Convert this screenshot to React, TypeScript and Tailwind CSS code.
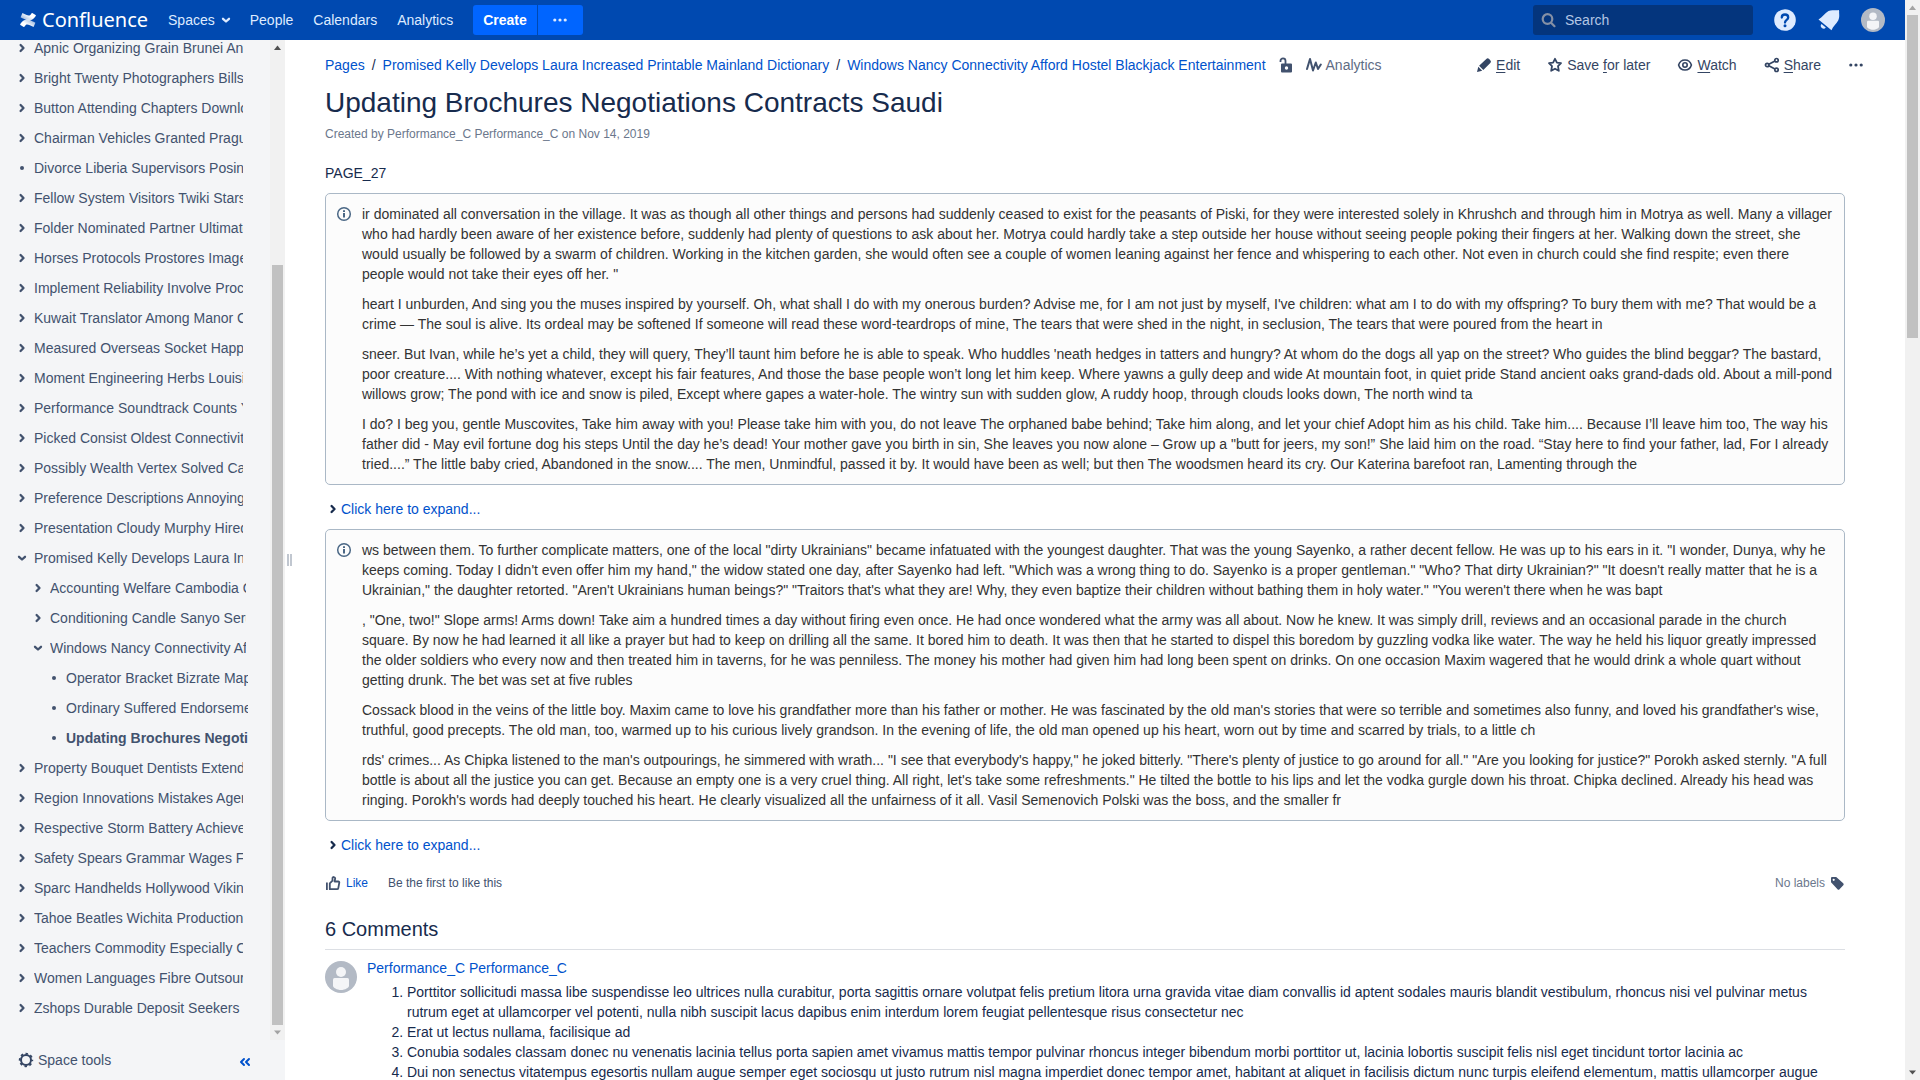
import React from "react";

type TreeItem = { label: string; level: 0 | 1 | 2; kind: "closed" | "open" | "leaf"; current?: boolean };

const top = (label: string): TreeItem => ({ label, level: 0, kind: "closed" });

const tree: TreeItem[] = [
  top("Apnic Organizing Grain Brunei Andy"),
  top("Bright Twenty Photographers Bills"),
  top("Button Attending Chapters Downloads"),
  top("Chairman Vehicles Granted Prague"),
  { label: "Divorce Liberia Supervisors Posing", level: 0, kind: "leaf" },
  top("Fellow System Visitors Twiki Stars"),
  top("Folder Nominated Partner Ultimately"),
  top("Horses Protocols Prostores Images"),
  top("Implement Reliability Involve Process"),
  top("Kuwait Translator Among Manor Child"),
  top("Measured Overseas Socket Happy"),
  top("Moment Engineering Herbs Louisiana"),
  top("Performance Soundtrack Counts Yarn"),
  top("Picked Consist Oldest Connectivity"),
  top("Possibly Wealth Vertex Solved Cape"),
  top("Preference Descriptions Annoying"),
  top("Presentation Cloudy Murphy Hired"),
  { label: "Promised Kelly Develops Laura Increased", level: 0, kind: "open" },
  { label: "Accounting Welfare Cambodia Ocean", level: 1, kind: "closed" },
  { label: "Conditioning Candle Sanyo Serum", level: 1, kind: "closed" },
  { label: "Windows Nancy Connectivity Afford Hostel", level: 1, kind: "open" },
  { label: "Operator Bracket Bizrate Maple", level: 2, kind: "leaf" },
  { label: "Ordinary Suffered Endorsement", level: 2, kind: "leaf" },
  { label: "Updating Brochures Negotiations", level: 2, kind: "leaf", current: true },
  top("Property Bouquet Dentists Extend"),
  top("Region Innovations Mistakes Agents"),
  top("Respective Storm Battery Achieved"),
  top("Safety Spears Grammar Wages From"),
  top("Sparc Handhelds Hollywood Viking"),
  top("Tahoe Beatles Wichita Production"),
  top("Teachers Commodity Especially Come"),
  top("Women Languages Fibre Outsource"),
  top("Zshops Durable Deposit Seekers"),
];

const firstPanel = [
  "ir dominated all conversation in the village. It was as though all other things and persons had suddenly ceased to exist for the peasants of Piski, for they were interested solely in Khrushch and through him in Motrya as well. Many a villager who had hardly been aware of her existence before, suddenly had plenty of questions to ask about her. Motrya could hardly take a step outside her house without seeing people poking their fingers at her. Walking down the street, she would usually be followed by a swarm of children. Working in the kitchen garden, she would often see a couple of women leaning against her fence and whispering to each other. Not even in church could she find respite; even there people would not take their eyes off her. \"",
  "heart I unburden, And sing you the muses inspired by yourself. Oh, what shall I do with my onerous burden? Advise me, for I am not just by myself, I've children: what am I to do with my offspring? To bury them with me? That would be a crime — The soul is alive. Its ordeal may be softened If someone will read these word-teardrops of mine, The tears that were shed in the night, in seclusion, The tears that were poured from the heart in",
  "sneer. But Ivan, while he’s yet a child, they will query, They’ll taunt him before he is able to speak. Who huddles 'neath hedges in tatters and hungry? At whom do the dogs all yap on the street? Who guides the blind beggar? The bastard, poor creature.... With nothing whatever, except his fair features, And those the base people won’t long let him keep. Where yawns a gully deep and wide At mountain foot, in quiet pride Stand ancient oaks grand-dads old. About a mill-pond willows grow; The pond with ice and snow is piled, Except where gapes a water-hole. The wintry sun with sudden glow, A ruddy hoop, through clouds looks down, The north wind ta",
  "I do? I beg you, gentle Muscovites, Take him away with you! Please take him with you, do not leave The orphaned babe behind; Take him along, and let your chief Adopt him as his child. Take him.... Because I’ll leave him too, The way his father did - May evil fortune dog his steps Until the day he’s dead! Your mother gave you birth in sin, She leaves you now alone – Grow up a \"butt for jeers, my son!” She laid him on the road. “Stay here to find your father, lad, For I already tried....” The little baby cried, Abandoned in the snow.... The men, Unmindful, passed it by. It would have been as well; but then The woodsmen heard its cry. Our Katerina barefoot ran, Lamenting through the",
];

const secondPanel = [
  "ws between them. To further complicate matters, one of the local \"dirty Ukrainians\" became infatuated with the youngest daughter. That was the young Sayenko, a rather decent fellow. He was up to his ears in it. \"I wonder, Dunya, why he keeps coming. Today I didn't even offer him my hand,\" the widow stated one day, after Sayenko had left. \"Which was a wrong thing to do. Sayenko is a proper gentleman.\" \"Who? That dirty Ukrainian?\" \"It doesn't really matter that he is a Ukrainian,\" the daughter retorted. \"Aren't Ukrainians human beings?\" \"Traitors that's what they are! Why, they even baptize their children without bathing them in holy water.\" \"You weren't there when he was bapt",
  ", \"One, two!\" Slope arms! Arms down! Take aim a hundred times a day without firing even once. He had once wondered what the army was all about. Now he knew. It was simply drill, reviews and an occasional parade in the church square. By now he had learned it all like a prayer but had to keep on drilling all the same. It bored him to death. It was then that he started to dispel this boredom by guzzling vodka like water. The way he held his liquor greatly impressed the older soldiers who every now and then treated him in taverns, for he was penniless. The money his mother had given him had long been spent on drinks. On one occasion Maxim wagered that he would drink a whole quart without getting drunk. The bet was set at five rubles",
  "Cossack blood in the veins of the little boy. Maxim came to love his grandfather more than his father or mother. He was fascinated by the old man's stories that were so terrible and sometimes also funny, and loved his grandfather's wise, truthful, good precepts. The old man, too, warmed up to his curious lively grandson. In the evening of life, the old man opened up his heart, worn out by time and scarred by trials, to a little ch",
  "rds' crimes... As Chipka listened to the man's outpourings, he simmered with wrath... \"I see that everybody's happy,\" he joked bitterly. \"There's plenty of justice to go around for all.\" \"Are you looking for justice?\" Porokh asked sternly. \"A full bottle is about all the justice you can get. Because an empty one is a very cruel thing. All right, let's take some refreshments.\" He tilted the bottle to his lips and let the vodka gurgle down his throat. Chipka declined. Already his head was ringing. Porokh's words had deeply touched his heart. He clearly visualized all the unfairness of it all. Vasil Semenovich Polski was the boss, and the smaller fr",
];

const commentItems = [
  "Porttitor sollicitudi massa libe suspendisse leo ultrices nulla curabitur, porta sagittis ornare volutpat felis pretium litora urna gravida vitae diam convallis id aptent sodales mauris blandit vestibulum, rhoncus nisi vel pulvinar metus rutrum eget at ullamcorper vel potenti, nulla nibh suscipit lacus dapibus enim interdum lorem feugiat pellentesque risus consectetur nec",
  "Erat ut lectus nullama, facilisique ad",
  "Conubia sodales classam donec nu venenatis lacinia tellus porta sapien amet vivamus mattis tempor pulvinar rhoncus integer bibendum morbi porttitor ut, lacinia lobortis suscipit felis nisl eget tincidunt tortor lacinia ac",
  "Dui non senectus vitatempus egesortis nullam augue semper eget sociosqu ut justo rutrum nisl magna imperdiet donec tempor amet, habitant at aliquet in facilisis dictum nunc turpis eleifend elementum, mattis ullamcorper augue",
];

function Chevron({ open = false }: { open?: boolean }) {
  return (
    <svg viewBox="0 0 16 16" className="size-4 shrink-0" fill="none" stroke="currentColor" strokeWidth="2.300" strokeLinecap="round" strokeLinejoin="round" aria-hidden="true">
      {open ? <path d="M5 6.800l3 2.700 3-2.700" /> : <path d="M6.600 5l2.900 3-2.900 3" />}
    </svg>
  );
}

function Dots() {
  return (
    <svg viewBox="0 0 16 16" className="size-4 shrink-0" fill="currentColor" aria-hidden="true">
      <circle cx="2.800" cy="8" r="1.600" />
      <circle cx="8" cy="8" r="1.600" />
      <circle cx="13.200" cy="8" r="1.600" />
    </svg>
  );
}

function Avatar({ className }: { className: string }) {
  return (
    <svg viewBox="0 0 32 32" className={className} role="img" aria-label="Profile picture">
      <circle cx="16" cy="16" r="16" fill="#b3bac5" />
      <circle cx="16" cy="11" r="5" fill="#f4f5f7" />
      <path d="M8 18.500a1.500 1.500 0 0 1 1.500-1.500h13a1.500 1.500 0 0 1 1.500 1.500V25c0 1.500-4 4-8 4s-8-2.500-8-4z" fill="#f4f5f7" />
    </svg>
  );
}

function Scrollbar({ thumb, atTop, atBottom }: { thumb: React.ReactNode; atTop?: boolean; atBottom?: boolean }) {
  return (
    <div className="flex w-[15px] shrink-0 flex-col items-center bg-[#f1f1f1]" aria-hidden="true">
      <svg viewBox="0 0 15 15" className={`size-[15px] shrink-0 ${atTop ? "text-[#a3a3a3]" : "text-[#505050]"}`} fill="currentColor">
        <path d="M7.500 5.500L11 10H4z" />
      </svg>
      <div className="flex min-h-0 w-[11px] flex-1 flex-col">{thumb}</div>
      <svg viewBox="0 0 15 15" className={`size-[15px] shrink-0 ${atBottom ? "text-[#a3a3a3]" : "text-[#505050]"}`} fill="currentColor">
        <path d="M7.500 9.500L11 5.500H4z" />
      </svg>
    </div>
  );
}

function Header() {
  return (
    <header className="flex h-10 shrink-0 items-center bg-[#0049b0] px-5 text-sm text-[#deebff]">
      <a href="#home" className="flex items-center gap-1.5 text-white">
        <svg viewBox="0 0 16 16" className="size-4" aria-hidden="true">
          <defs>
            <linearGradient id="swoosh-a" x1="1" y1="0" x2="0.300" y2="0.500">
              <stop offset="0" stopColor="#fff" stopOpacity="0.500" />
              <stop offset="1" stopColor="#fff" />
            </linearGradient>
            <linearGradient id="swoosh-b" x1="0" y1="1" x2="0.700" y2="0.500">
              <stop offset="0" stopColor="#fff" stopOpacity="0.500" />
              <stop offset="1" stopColor="#fff" />
            </linearGradient>
          </defs>
          <path d="M.6 11.600l-.4.700a.5.5 0 0 0 .2.700l3.300 2a.5.5 0 0 0 .7-.2l.5-.8c1.300-2.100 2.600-1.900 5-.8l3.200 1.600a.5.5 0 0 0 .7-.3l1.500-3.500a.5.5 0 0 0-.2-.6c-.7-.3-2-1-3.200-1.500C7.600 6.800 3.700 6.900.6 11.600z" fill="url(#swoosh-a)" />
          <path d="M15.400 4.400l.4-.700a.5.5 0 0 0-.2-.7l-3.300-2a.5.5 0 0 0-.7.200l-.5.800c-1.300 2.100-2.600 1.900-5 .8L2.900 1.200a.5.5 0 0 0-.7.300L.7 5a.5.5 0 0 0 .2.600c.7.300 2 1 3.200 1.500 4.300 2.100 8.200 2 11.300-2.700z" fill="url(#swoosh-b)" />
        </svg>
        <span className="font-['Noto_Sans',sans-serif] text-xl leading-7">Confluence</span>
      </a>
      <nav className="ml-5 flex items-center gap-5" aria-label="Main">
        <div className="flex items-center gap-4">
          <button type="button" className="flex items-center gap-[3px]">
            Spaces
            <Chevron open />
          </button>
          <a href="#people">People</a>
        </div>
        <a href="#calendars">Calendars</a>
        <a href="#analytics">Analytics</a>
      </nav>
      <div className="ml-5 flex gap-px">
        <button type="button" className="h-[30px] rounded-l-[3px] bg-[#0065ff] px-2.5 font-bold text-white">Create</button>
        <button type="button" aria-label="Create from template" className="flex h-[30px] w-[45px] items-center justify-center rounded-r-[3px] bg-[#0065ff]">
          <Dots />
        </button>
      </div>
      <label className="ml-auto flex h-[30px] w-[220px] items-center gap-2 rounded-[3px] bg-[#04357d] pl-2">
        <svg viewBox="0 0 16 16" className="size-4 shrink-0 text-[#8590a5]" fill="none" stroke="currentColor" strokeWidth="2.200" strokeLinecap="round" aria-hidden="true">
          <circle cx="6.500" cy="7" r="4.800" />
          <path d="M10.300 11l3.200 3.200" />
        </svg>
        <input type="search" aria-label="Search" placeholder="Search" className="min-w-0 flex-1 bg-transparent outline-none placeholder:text-[#b3c6e4]" />
      </label>
      <div className="ml-5 flex items-center gap-5">
        <button type="button" aria-label="Help" className="flex size-6 items-center justify-center">
          <svg viewBox="0 0 24 24" className="size-6" aria-hidden="true">
            <circle cx="12" cy="12" r="10.800" fill="#deebff" />
            <path d="M8.800 9.500c0-4 6.400-4 6.400 0 0 2.300-3.200 2.400-3.200 5" fill="none" stroke="#0049b0" strokeWidth="2.300" strokeLinecap="round" />
            <circle cx="12" cy="17.800" r="1.500" fill="#0049b0" />
          </svg>
        </button>
        <button type="button" aria-label="Notifications" className="flex size-6 items-center justify-center">
          <svg viewBox="0 0 24 24" className="size-6" fill="#deebff" aria-hidden="true">
            <path d="M1.500 11.500C5.500 9.500 7.500 5 11.500 3 14.500 1.500 18 2.700 20.500 2.200l1.300-.2.400 1.300c-.5 1.200 1 5.500-1 9.200-2 3.700-5.200 5.500-6.700 9.700z" />
            <path d="M4.500 16l4.300 3.600a2.700 2.700 0 0 1-4.300-3.600z" />
          </svg>
        </button>
        <button type="button" aria-label="Your profile" className="flex size-6 items-center justify-center">
          <Avatar className="size-6" />
        </button>
      </div>
    </header>
  );
}

const indent = ["pl-[14px] w-[243px]", "pl-[30px] w-[246px]", "pl-[46px] w-[248px]"];

function Sidebar() {
  return (
    <aside className="flex w-[285px] shrink-0 flex-col bg-[#f4f5f7] text-sm text-[#42526e]">
      <div className="flex min-h-0 flex-1">
        <nav className="flex min-w-0 flex-1 flex-col justify-end overflow-hidden pb-[17px]" aria-label="Page tree">
          <ul>
            {tree.map((item) => (
              <li key={item.label} className={`flex h-[30px] items-center gap-1 overflow-hidden ${indent[item.level]}`}>
                {item.kind === "leaf" ? (
                  <span className="flex size-4 shrink-0 items-center justify-center">
                    <span className="size-1 rounded-full bg-[#42526e]" />
                  </span>
                ) : (
                  <button type="button" aria-label={`Toggle ${item.label}`}>
                    <Chevron open={item.kind === "open"} />
                  </button>
                )}
                <a href="#page" className={`min-w-0 flex-1 overflow-hidden leading-5 whitespace-nowrap ${item.current ? "font-bold" : ""}`}>
                  {item.label}
                </a>
              </li>
            ))}
          </ul>
        </nav>
        <Scrollbar
          atBottom
          thumb={
            <>
              <div className="flex-[21]" />
              <div className="flex-[76] bg-[#c1c1c1]" />
            </>
          }
        />
      </div>
      <div className="flex h-10 shrink-0 items-center justify-between pr-8 pl-[18px]">
        <button type="button" className="flex items-center gap-1">
          <svg viewBox="0 0 16 16" className="size-4" aria-hidden="true">
            <circle cx="8" cy="8" r="5" fill="none" stroke="#344563" strokeWidth="2" />
            <circle cx="8" cy="8" r="6.300" fill="none" stroke="#344563" strokeWidth="1.800" strokeDasharray="2.500 2.450" strokeDashoffset="1.250" />
          </svg>
          Space tools
        </button>
        <button type="button" aria-label="Collapse sidebar" className="pt-1 text-[#0052cc]">
          <svg viewBox="0 0 16 16" className="size-4" fill="none" stroke="currentColor" strokeWidth="2" strokeLinecap="round" strokeLinejoin="round" aria-hidden="true">
            <path d="M7 5L4 8l3 3M12 5L9 8l3 3" />
          </svg>
        </button>
      </div>
    </aside>
  );
}

function InfoPanel({ paragraphs }: { paragraphs: string[] }) {
  return (
    <section className="mt-2.5 flex gap-2.5 rounded-[5px] border border-[#aab8c6] bg-[#fcfcfc] p-2.5 text-[#333]">
      <svg viewBox="0 0 16 16" className="mt-0.5 size-4 shrink-0" fill="none" stroke="#4a6785" aria-hidden="true">
        <circle cx="8" cy="8" r="6.300" strokeWidth="1.500" />
        <path d="M8 7v4.500" strokeWidth="2" />
        <path d="M8 4.200V6" strokeWidth="2" />
      </svg>
      <div className="flex flex-col gap-2.5">
        {paragraphs.map((text) => (
          <p key={text}>{text}</p>
        ))}
      </div>
    </section>
  );
}

function Expand() {
  return (
    <button type="button" className="mt-3.5 flex items-center text-[#0052cc]">
      <span className="text-[#172b4d]">
        <Chevron />
      </span>
      Click here to expand...
    </button>
  );
}

function PageBar() {
  return (
    <div className="flex h-[30px] items-center justify-between pr-[41px]">
      <div className="flex items-center">
        <nav className="flex items-center gap-[7px]" aria-label="Breadcrumb">
          <a href="#pages" className="text-[#0052cc]">Pages</a>
          <span>/</span>
          <a href="#promised" className="text-[#0052cc]">Promised Kelly Develops Laura Increased Printable Mainland Dictionary</a>
          <span>/</span>
          <a href="#windows" className="text-[#0052cc]">Windows Nancy Connectivity Afford Hostel Blackjack Entertainment</a>
        </nav>
        <button type="button" aria-label="Restrictions" className="ml-3 text-[#42526e]">
          <svg viewBox="0 0 16 16" className="size-4" aria-hidden="true">
            <path d="M2.500 5V3.800a2.500 2.500 0 0 1 5 0V7" fill="none" stroke="currentColor" strokeWidth="1.800" />
            <path fillRule="evenodd" d="M4 6.500h9a1 1 0 0 1 1 1v7a1 1 0 0 1-1 1H4a1 1 0 0 1-1-1v-7a1 1 0 0 1 1-1zM8.500 9.300a1.700 1.700 0 1 0 0 3.400 1.700 1.700 0 0 0 0-3.400z" fill="currentColor" />
          </svg>
        </button>
        <a href="#stats" className="ml-3 flex items-center gap-1 text-[#5e6c84]">
          <svg viewBox="0 0 16 16" className="size-4 text-[#42526e]" fill="none" stroke="currentColor" strokeWidth="2" strokeLinecap="round" strokeLinejoin="round" aria-hidden="true">
            <path d="M1 12L4 2l3 11.500 2.800-8L12 12l2.800-4.500" />
          </svg>
          Analytics
        </a>
      </div>
      <div className="flex items-center gap-[27px] text-[#344563]">
        <button type="button" className="flex items-center gap-1">
          <svg viewBox="0 0 16 16" className="size-4" fill="currentColor" aria-hidden="true">
            <path d="M10.300 2a2 2 0 0 1 2.800 0l1.200 1.200a2 2 0 0 1 0 2.800L7.300 13 3.100 8.800zM2.300 9.800l3.900 3.900L1 15z" />
          </svg>
          <span><u className="underline-offset-2">E</u>dit</span>
        </button>
        <button type="button" className="flex items-center gap-1">
          <svg viewBox="0 0 16 16" className="size-4" fill="none" stroke="currentColor" strokeWidth="1.800" strokeLinejoin="round" aria-hidden="true">
            <path d="M8 1.800l1.900 3.900 4.100.5-3 3 .8 4.600L8 11.700l-3.800 2.100.8-4.600-3-3 4.100-.5z" />
          </svg>
          <span>Save <u className="underline-offset-2">f</u>or later</span>
        </button>
        <button type="button" className="flex items-center gap-1">
          <svg viewBox="0 0 16 16" className="size-4" fill="none" stroke="currentColor" strokeWidth="1.600" aria-hidden="true">
            <path d="M1.600 8C3.600 1.300 12.400 1.300 14.400 8 12.400 14.700 3.600 14.700 1.600 8z" />
            <circle cx="8" cy="8" r="2.200" />
          </svg>
          <span><u className="underline-offset-2">W</u>atch</span>
        </button>
        <button type="button" className="flex items-center gap-1">
          <svg viewBox="0 0 16 16" className="size-4" fill="none" stroke="currentColor" strokeWidth="1.700" aria-hidden="true">
            <circle cx="3.200" cy="8" r="1.700" />
            <circle cx="12.500" cy="3.200" r="1.700" />
            <circle cx="12.500" cy="12.800" r="1.700" />
            <path d="M4.800 7.200L11 4M4.800 8.800L11 12" />
          </svg>
          <span><u className="underline-offset-2">S</u>hare</span>
        </button>
        <button type="button" aria-label="More actions">
          <Dots />
        </button>
      </div>
    </div>
  );
}

export default function App() {
  return (
    <div className="flex h-screen overflow-hidden bg-white font-['Liberation_Sans',Arial,sans-serif] text-sm leading-5 text-[#172b4d]">
      <div className="flex min-w-0 flex-1 flex-col">
        <Header />
        <div className="flex min-h-0 flex-1">
          <Sidebar />
          <div className="flex w-10 shrink-0 items-center gap-px pl-0.5" role="separator" aria-label="Resize sidebar">
            <span className="h-3 w-0.5 bg-[#c1c7d0]" />
            <span className="h-3 w-0.5 bg-[#c1c7d0]" />
          </div>
          <main className="min-w-0 flex-1 overflow-hidden pt-2.5">
            <PageBar />
            <div className="pr-[60px]">
              <h1 className="mt-[7px] text-[28px] leading-8">Updating Brochures Negotiations Contracts Saudi</h1>
              <p className="mt-[5px] text-xs leading-5 text-[#6b778c]">
                Created by <a href="#author">Performance_C Performance_C</a> on <a href="#history">Nov 14, 2019</a>
              </p>
              <p className="mt-[19px]">PAGE_27</p>
              <InfoPanel paragraphs={firstPanel} />
              <Expand />
              <InfoPanel paragraphs={secondPanel} />
              <Expand />
              <div className="mt-[18px] flex items-center justify-between text-xs leading-5 text-[#42526e]">
                <div className="flex items-center gap-5">
                  <button type="button" className="flex items-center gap-[5px] text-[#0052cc]">
                    <svg viewBox="0 0 16 16" className="size-4 text-[#42526e]" fill="none" stroke="currentColor" strokeWidth="1.800" strokeLinejoin="round" aria-hidden="true">
                      <path d="M1.900 7.500V15" />
                      <path d="M4.800 14.200V8.300L7.500 5.600V3c0-1.400 2.700-1.400 2.700.6L9.500 6.500h3.700c.8 0 1.200.6 1.100 1.200l-1 5.400c-.1.700-.6 1.100-1.300 1.100z" />
                    </svg>
                    Like
                  </button>
                  <span>Be the first to like this</span>
                </div>
                <div className="flex items-center gap-1 text-[#6b778c]">
                  No labels
                  <button type="button" aria-label="Edit labels" className="text-[#42526e]">
                    <svg viewBox="0 0 16 16" className="size-4" fill="currentColor" aria-hidden="true">
                      <path fillRule="evenodd" d="M3 2h4.200l7 6.300a1.400 1.400 0 0 1 .1 2l-3.800 3.900a1.400 1.400 0 0 1-2 0L2 7.300V3a1 1 0 0 1 1-1zm1.700 1.700a1.100 1.100 0 1 0 0 2.200 1.100 1.100 0 0 0 0-2.200z" />
                    </svg>
                  </button>
                </div>
              </div>
              <h2 className="mt-6 border-b border-[#dcdfe4] pb-2 text-xl leading-6">6 Comments</h2>
              <article className="mt-2 flex gap-2.5">
                <Avatar className="mt-[3px] size-8 shrink-0" />
                <div className="min-w-0 flex-1">
                  <a href="#commenter" className="text-[#0052cc]">Performance_C Performance_C</a>
                  <ol className="mt-1 list-decimal pl-10">
                    {commentItems.map((text) => (
                      <li key={text}>{text}</li>
                    ))}
                  </ol>
                </div>
              </article>
            </div>
          </main>
        </div>
      </div>
      <Scrollbar
        atTop
        thumb={
          <>
            <div className="flex-[323] bg-[#c1c1c1]" />
            <div className="flex-[727]" />
          </>
        }
      />
    </div>
  );
}
